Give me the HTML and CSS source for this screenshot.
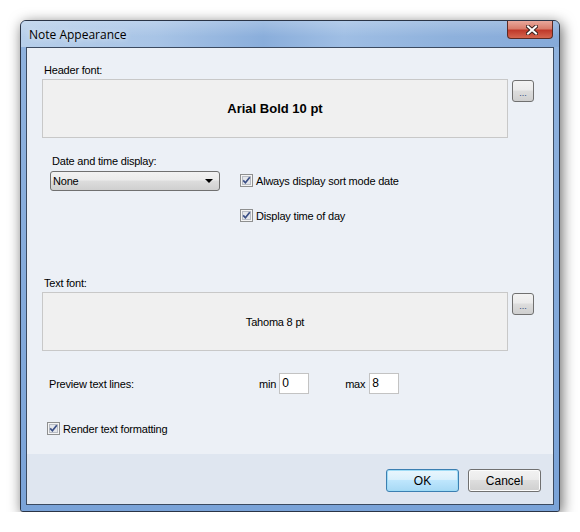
FILE: index.html
```html
<!DOCTYPE html>
<html>
<head>
<meta charset="utf-8">
<link rel="stylesheet" href="styles.css">
</head>
<body>
<div class="window">
  <div class="titlebar">
    <span class="title">Note Appearance</span>
    <div class="close">
      <svg width="12" height="10" viewBox="0 0 12 10">
        <path d="M2 1.5 L10 8.5 M10 1.5 L2 8.5" stroke="#3b2320" stroke-width="4" stroke-linecap="square" fill="none"/>
        <path d="M2 1.5 L10 8.5 M10 1.5 L2 8.5" stroke="#ffffff" stroke-width="2" stroke-linecap="square" fill="none"/>
      </svg>
    </div>
  </div>
  <div class="frame">
    <div class="client">
      <div class="main">
        <div class="label lbl-header">Header font:</div>
        <div class="fontrow">
          <div class="fontbox fb-bold">Arial Bold 10 pt</div>
          <button class="ell">...</button>
        </div>

        <div class="daterow">
          <div class="datecol">
            <div class="label lbl-date">Date and time display:</div>
            <div class="combo"><span>None</span><span class="arrow"></span></div>
          </div>
          <div class="checks">
            <div class="chk">
              <svg class="box" width="13" height="13" viewBox="0 0 13 13"><rect x="0.5" y="0.5" width="12" height="12" fill="#f4f4f4" stroke="#8e8f8f"/><rect x="2.5" y="2.5" width="8" height="8" fill="#e4e6ea" stroke="#b8bcc4"/><path d="M3.2 6.4 L5.4 8.8 L9.8 3.2" stroke="#3a4f86" stroke-width="1.7" fill="none"/></svg>
              <span>Always display sort mode date</span>
            </div>
            <div class="chk">
              <svg class="box" width="13" height="13" viewBox="0 0 13 13"><rect x="0.5" y="0.5" width="12" height="12" fill="#f4f4f4" stroke="#8e8f8f"/><rect x="2.5" y="2.5" width="8" height="8" fill="#e4e6ea" stroke="#b8bcc4"/><path d="M3.2 6.4 L5.4 8.8 L9.8 3.2" stroke="#3a4f86" stroke-width="1.7" fill="none"/></svg>
              <span>Display time of day</span>
            </div>
          </div>
        </div>

        <div class="label lbl-text">Text font:</div>
        <div class="fontrow">
          <div class="fontbox">Tahoma 8 pt</div>
          <button class="ell">...</button>
        </div>

        <div class="previewrow">
          <span class="plabel">Preview text lines:</span>
          <span class="minlbl">min</span>
          <div class="num">0</div>
          <span class="maxlbl">max</span>
          <div class="num">8</div>
        </div>

        <div class="chk render">
          <svg class="box" width="13" height="13" viewBox="0 0 13 13"><rect x="0.5" y="0.5" width="12" height="12" fill="#f4f4f4" stroke="#8e8f8f"/><rect x="2.5" y="2.5" width="8" height="8" fill="#e4e6ea" stroke="#b8bcc4"/><path d="M3.2 6.4 L5.4 8.8 L9.8 3.2" stroke="#3a4f86" stroke-width="1.7" fill="none"/></svg>
          <span>Render text formatting</span>
        </div>
      </div>
      <div class="footer">
        <button class="btn ok">OK</button>
        <button class="btn cancel">Cancel</button>
      </div>
    </div>
  </div>
</div>
</body>
</html>
```

FILE: styles.css
```css
html, body {
  margin: 0;
  padding: 0;
  background: #ffffff;
}
body {
  font-family: "Liberation Sans", Arial, sans-serif;
  font-size: 11px;
  letter-spacing: -0.2px;
  color: #000;
}
.window {
  margin: 20px 0 0 20px;
  width: 538px;
  height: 490px;
  border: 1px solid #2a3446;
  border-radius: 6px 6px 3px 3px;
  background: #7ea4d6;
  box-shadow: 2px 3px 14px rgba(0,0,0,0.6);
  display: flex;
  flex-direction: column;
  overflow: hidden;
}
.titlebar {
  height: 26px;
  display: flex;
  align-items: flex-start;
  justify-content: space-between;
  background:
    linear-gradient(180deg, rgba(255,255,255,0.22) 0%, rgba(255,255,255,0) 60%),
    linear-gradient(90deg, #b7cfea 0%, #a8c4e6 25%, #8aaedb 45%, #9fbee4 60%, #8eb1dc 80%, #86aad9 100%);
}
.title {
  font-family: "Open Sans", "Liberation Sans", sans-serif;
  font-size: 12px;
  letter-spacing: 0;
  color: #000;
  margin: 5px 0 0 8px;
  text-shadow: 0 0 6px rgba(255,255,255,0.9);
}
.close {
  width: 44px;
  height: 17px;
  margin-right: 6px;
  border: 1px solid #5b2a24;
  border-top: none;
  border-radius: 0 0 4px 4px;
  background: linear-gradient(180deg, #e9a89c 0%, #d97d6c 45%, #c0392a 55%, #d5664f 100%);
  display: flex;
  align-items: center;
  justify-content: center;
}
.close svg { display: block; margin-left: 4px; }
.frame {
  flex: 1;
  padding: 0 5px 6px 5px;
  background: linear-gradient(180deg, #8fb2de 0%, #7aa3d8 100%);
  display: flex;
}
.client {
  flex: 1;
  border: 1px solid #3b4a60;
  background: #ecf0f6;
  display: flex;
  flex-direction: column;
}
.main {
  height: 390px;
  padding: 16px 0 0 15px;
  display: flex;
  flex-direction: column;
  align-items: flex-start;
}
.label {
  line-height: 13px;
  height: 13px;
}
.lbl-header { margin: 0 0 2px 2px; }
.lbl-text { margin: 55px 0 2px 2px; }
.fontrow {
  display: flex;
  align-items: flex-start;
  gap: 4px;
}
.fontbox {
  width: 464px;
  height: 57px;
  border: 1px solid #c8c8c8;
  background: #f0f0f0;
  display: flex;
  align-items: center;
  justify-content: center;
}
.fb-bold {
  font-weight: bold;
  font-size: 13px;
  letter-spacing: 0;
}
.ell {
  margin-top: 1px;
  width: 22px;
  height: 22px;
  border: 1px solid #707070;
  border-radius: 3px;
  background: linear-gradient(180deg, #f3f3f3 0%, #ebebeb 45%, #dddddd 50%, #cfcfcf 100%);
  font-family: "Liberation Sans", sans-serif;
  font-size: 9px;
  line-height: 10px;
  color: #2b4a80;
  padding: 4px 0 0 0;
  text-align: center;
}
.daterow {
  display: flex;
  align-items: flex-start;
  margin: 17px 0 0 8px;
}
.datecol {
  display: flex;
  flex-direction: column;
}
.lbl-date { margin: 0 0 3px 2px; }
.combo {
  height: 18px;
  border: 1px solid #707070;
  border-radius: 3px;
  background: linear-gradient(180deg, #f2f2f2 0%, #ebebeb 45%, #dddddd 50%, #cfcfcf 100%);
  display: flex;
  align-items: center;
  justify-content: space-between;
  padding: 0 6px 0 2px;
  box-sizing: content-box;
  width: 160px;
}
.arrow {
  width: 0;
  height: 0;
  border-left: 4px solid transparent;
  border-right: 4px solid transparent;
  border-top: 4px solid #000;
}
.checks {
  margin: 19px 0 0 20px;
  display: flex;
  flex-direction: column;
  gap: 22px;
}
.chk {
  display: flex;
  align-items: center;
  gap: 3px;
  height: 13px;
}
.chk .box { display: block; flex: none; }
.previewrow {
  display: flex;
  align-items: center;
  margin: 22px 0 0 7px;
  height: 21px;
}
.plabel { width: 210px; }
.minlbl { margin-right: 3px; }
.maxlbl { margin: 0 4px 0 36px; }
.num {
  width: 26px;
  height: 19px;
  border: 1px solid #c3c3c3;
  background: #fff;
  line-height: 19px;
  padding-left: 2px;
  font-size: 12px;
}
.render {
  margin: 28px 0 0 5px;
}
.footer {
  flex: 1;
  background: #dfe6f0;
  display: flex;
  justify-content: flex-end;
  align-items: flex-start;
  padding: 15px 12px 0 0;
  gap: 9px;
}
.btn {
  width: 73px;
  height: 23px;
  border-radius: 3px;
  font-family: "Liberation Sans", sans-serif;
  font-size: 12px;
  letter-spacing: 0;
  color: #000;
  padding: 0;
}
.ok {
  border: 1px solid #3c7fb1;
  background: linear-gradient(180deg, #eaf6fd 0%, #d9f0fc 45%, #bee6fd 50%, #a7d9f5 100%);
  box-shadow: inset 0 0 0 1px #9fdcf6;
}
.cancel {
  border: 1px solid #707070;
  background: linear-gradient(180deg, #f2f2f2 0%, #ebebeb 45%, #dddddd 50%, #cfcfcf 100%);
  box-shadow: inset 0 0 0 1px #fcfcfc;
}
```
